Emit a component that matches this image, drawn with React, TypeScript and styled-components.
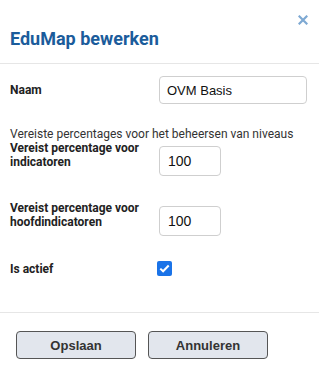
import styled, { createGlobalStyle } from 'styled-components';

const GlobalStyle = createGlobalStyle`
  html, body {
    margin: 0;
    padding: 0;
    background: #ffffff;
  }
  body {
    font-family: Roboto, 'Liberation Sans', Arial, sans-serif;
    color: #222;
  }
`;

type FieldRowProps = {
  $align?: 'center' | 'start';
};

export default function App() {
  return (
    <>
      <GlobalStyle />
      <Dialog>
        <Header>
          <CloseRow>
            <CloseButton aria-label="Sluiten">
              <svg width="10" height="10" viewBox="0 0 10 10">
                <path
                  d="M1.5 1.5 L8.5 8.5 M8.5 1.5 L1.5 8.5"
                  stroke="#7ea9d3"
                  strokeWidth="2.2"
                  strokeLinecap="square"
                />
              </svg>
            </CloseButton>
          </CloseRow>
          <Title>EduMap bewerken</Title>
        </Header>

        <Body>
          <FieldRow $align="center">
            <Label>Naam</Label>
            <TextInput defaultValue="OVM Basis" />
          </FieldRow>

          <Hint>Vereiste percentages voor het beheersen van niveaus</Hint>

          <Rows>
            <FieldRow>
              <Label>Vereist percentage voor indicatoren</Label>
              <NumberInput defaultValue="100" />
            </FieldRow>
            <FieldRow>
              <Label>Vereist percentage voor hoofdindicatoren</Label>
              <NumberInput defaultValue="100" />
            </FieldRow>
            <FieldRow $align="center">
              <Label>Is actief</Label>
              <Checkbox role="checkbox" aria-checked="true">
                <svg width="11" height="9" viewBox="0 0 11 9">
                  <path
                    d="M1.3 4.6 L4.1 7.3 L9.7 1.5"
                    fill="none"
                    stroke="#fff"
                    strokeWidth="2"
                  />
                </svg>
              </Checkbox>
            </FieldRow>
          </Rows>
        </Body>

        <Footer>
          <Button>Opslaan</Button>
          <Button>Annuleren</Button>
        </Footer>
      </Dialog>
    </>
  );
}

const Dialog = styled.div`
  width: 319px;
  height: 375px;
  background: #fff;
  display: flex;
  flex-direction: column;
`;

const Header = styled.header`
  padding: 12px 11px 14px 10px;
  border-bottom: 1px solid #e6e6e6;
`;

const CloseRow = styled.div`
  display: flex;
  justify-content: flex-end;
  height: 16px;
`;

const CloseButton = styled.button`
  border: 0;
  background: none;
  padding: 0;
  width: 10px;
  height: 16px;
  display: flex;
  align-items: center;
  cursor: pointer;
`;

const Title = styled.h1`
  margin: 0;
  font-size: 18px;
  line-height: 21px;
  font-weight: 700;
  color: #1b5c9b;
`;

const Body = styled.section`
  padding: 12px 12px 36px 10px;
`;

const FieldRow = styled.div<FieldRowProps>`
  display: grid;
  grid-template-columns: 149px 1fr;
  align-items: ${({ $align }) => ($align === 'center' ? 'center' : 'start')};
`;

const Label = styled.label`
  font-size: 12px;
  line-height: 14px;
  font-weight: 700;
  color: #222;
  max-width: 140px;
`;

const Hint = styled.p`
  margin: 23px 0 0;
  font-size: 12px;
  line-height: 14px;
  font-weight: 400;
  color: #333;
`;

const Rows = styled.div`
  display: flex;
  flex-direction: column;
  gap: 25px;
`;

const TextInput = styled.input`
  box-sizing: border-box;
  width: 148px;
  height: 28px;
  padding: 0 7px;
  border: 1px solid #cfcfcf;
  border-radius: 4px;
  font-family: 'Liberation Sans', Arial, sans-serif;
  font-size: 13px;
  color: #111;
  outline: none;
`;

const NumberInput = styled(TextInput)`
  width: 62px;
  height: 30px;
  margin-top: 5px;
  padding: 0 8px;
  font-size: 14px;
`;

const Checkbox = styled.span`
  width: 15px;
  height: 15px;
  margin-left: -2px;
  border-radius: 2px;
  background: #1a73e8;
  display: flex;
  align-items: center;
  justify-content: center;
`;

const Footer = styled.footer`
  border-top: 1px solid #e6e6e6;
  padding: 18px 16px;
  display: flex;
  gap: 12px;
`;

const Button = styled.button`
  box-sizing: border-box;
  width: 120px;
  height: 28px;
  border: 1px solid #555;
  border-radius: 4px;
  background: #e2e6ed;
  font-family: 'Liberation Sans', Arial, sans-serif;
  font-size: 13px;
  font-weight: 700;
  color: #333;
  cursor: pointer;
`;
